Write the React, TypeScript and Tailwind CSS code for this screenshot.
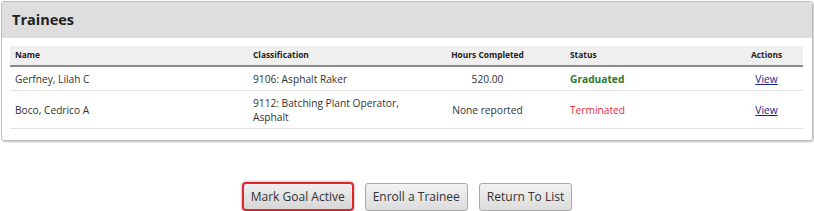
import React from 'react';

const rows = [
  { name: 'Gerfney, Lilah C', cls: '9106: Asphalt Raker', hours: '520.00', status: 'Graduated' },
  { name: 'Boco, Cedrico A', cls: '9112: Batching Plant Operator, Asphalt', hours: 'None reported', status: 'Terminated' },
];

export default function App(): React.ReactElement {
  return (
    <div className="w-[814px] h-[211px] bg-white font-['Open_Sans',sans-serif] text-[#333]">
      {/* Trainees panel */}
      <div className="ml-px mt-px w-[812px] rounded-[3px] border border-[#bdbdbd] shadow-[1px_1px_2px_rgba(0,0,0,0.25)] overflow-hidden">
        <div className="h-[36px] bg-[#dedede] flex items-center px-[10px]">
          <h2 className="text-[14.5px] font-bold text-[#222]">Trainees</h2>
        </div>
        <div className="pl-[8px] pr-[9px] pt-[8px] pb-[11px]">
          <table className="w-[793px] table-fixed border-collapse text-[10.2px]">
            <colgroup>
              <col className="w-[238px]" />
              <col className="w-[192px]" />
              <col className="w-[95px]" />
              <col className="w-[195px]" />
              <col className="w-[73px]" />
            </colgroup>
            <thead>
              <tr className="bg-[#efefef] border-b-2 border-[#8a8a8a] h-[20px] text-[8.4px] font-bold text-[#222]">
                <th className="text-left pl-[5px]">Name</th>
                <th className="text-left pl-[5px]">Classification</th>
                <th className="text-center">Hours Completed</th>
                <th className="text-left pl-[35px]">Status</th>
                <th className="text-center">Actions</th>
              </tr>
            </thead>
            <tbody>
              {rows.map((r) => (
                <tr key={r.name} className="border-b border-[#e2e2e2]">
                  <td className="pl-[5px] pt-[5px] pb-[4px] leading-[14px]">{r.name}</td>
                  <td className="pl-[5px] pr-[10px] pt-[5px] pb-[4px] leading-[14px]">{r.cls}</td>
                  <td className="text-center pt-[5px] pb-[4px] leading-[14px]">{r.hours}</td>
                  <td className="pl-[35px] pt-[5px] pb-[4px] leading-[14px]">
                    {r.status === 'Graduated' ? (
                      <span className="font-bold text-[#2f7a2f]">Graduated</span>
                    ) : (
                      <span className="text-[#e0303a]">Terminated</span>
                    )}
                  </td>
                  <td className="text-center pt-[5px] pb-[4px] leading-[14px]">
                    <a href="#" className="underline text-[#1b1b8a]">View</a>
                  </td>
                </tr>
              ))}
            </tbody>
          </table>
        </div>
      </div>

      {/* Actions */}
      <div className="flex justify-center gap-[11px] mt-[41px] text-[12px]">
        <button className="h-[29px] px-[7px] rounded-[4px] border-2 border-[#e0242c] bg-gradient-to-b from-[#f0f0f0] to-[#d6d6d6] text-[#333] shadow-[0_0_3px_rgba(0,0,0,0.4)]">
          Mark Goal Active
        </button>
        <button className="h-[28px] mt-px px-[7px] rounded-[3px] border border-[#a8a8a8] bg-gradient-to-b from-[#f2f2f2] to-[#dcdcdc] text-[#333]">
          Enroll a Trainee
        </button>
        <button className="h-[28px] mt-px px-[7px] rounded-[3px] border border-[#a8a8a8] bg-gradient-to-b from-[#f2f2f2] to-[#dcdcdc] text-[#333]">
          Return To List
        </button>
      </div>
    </div>
  );
}
